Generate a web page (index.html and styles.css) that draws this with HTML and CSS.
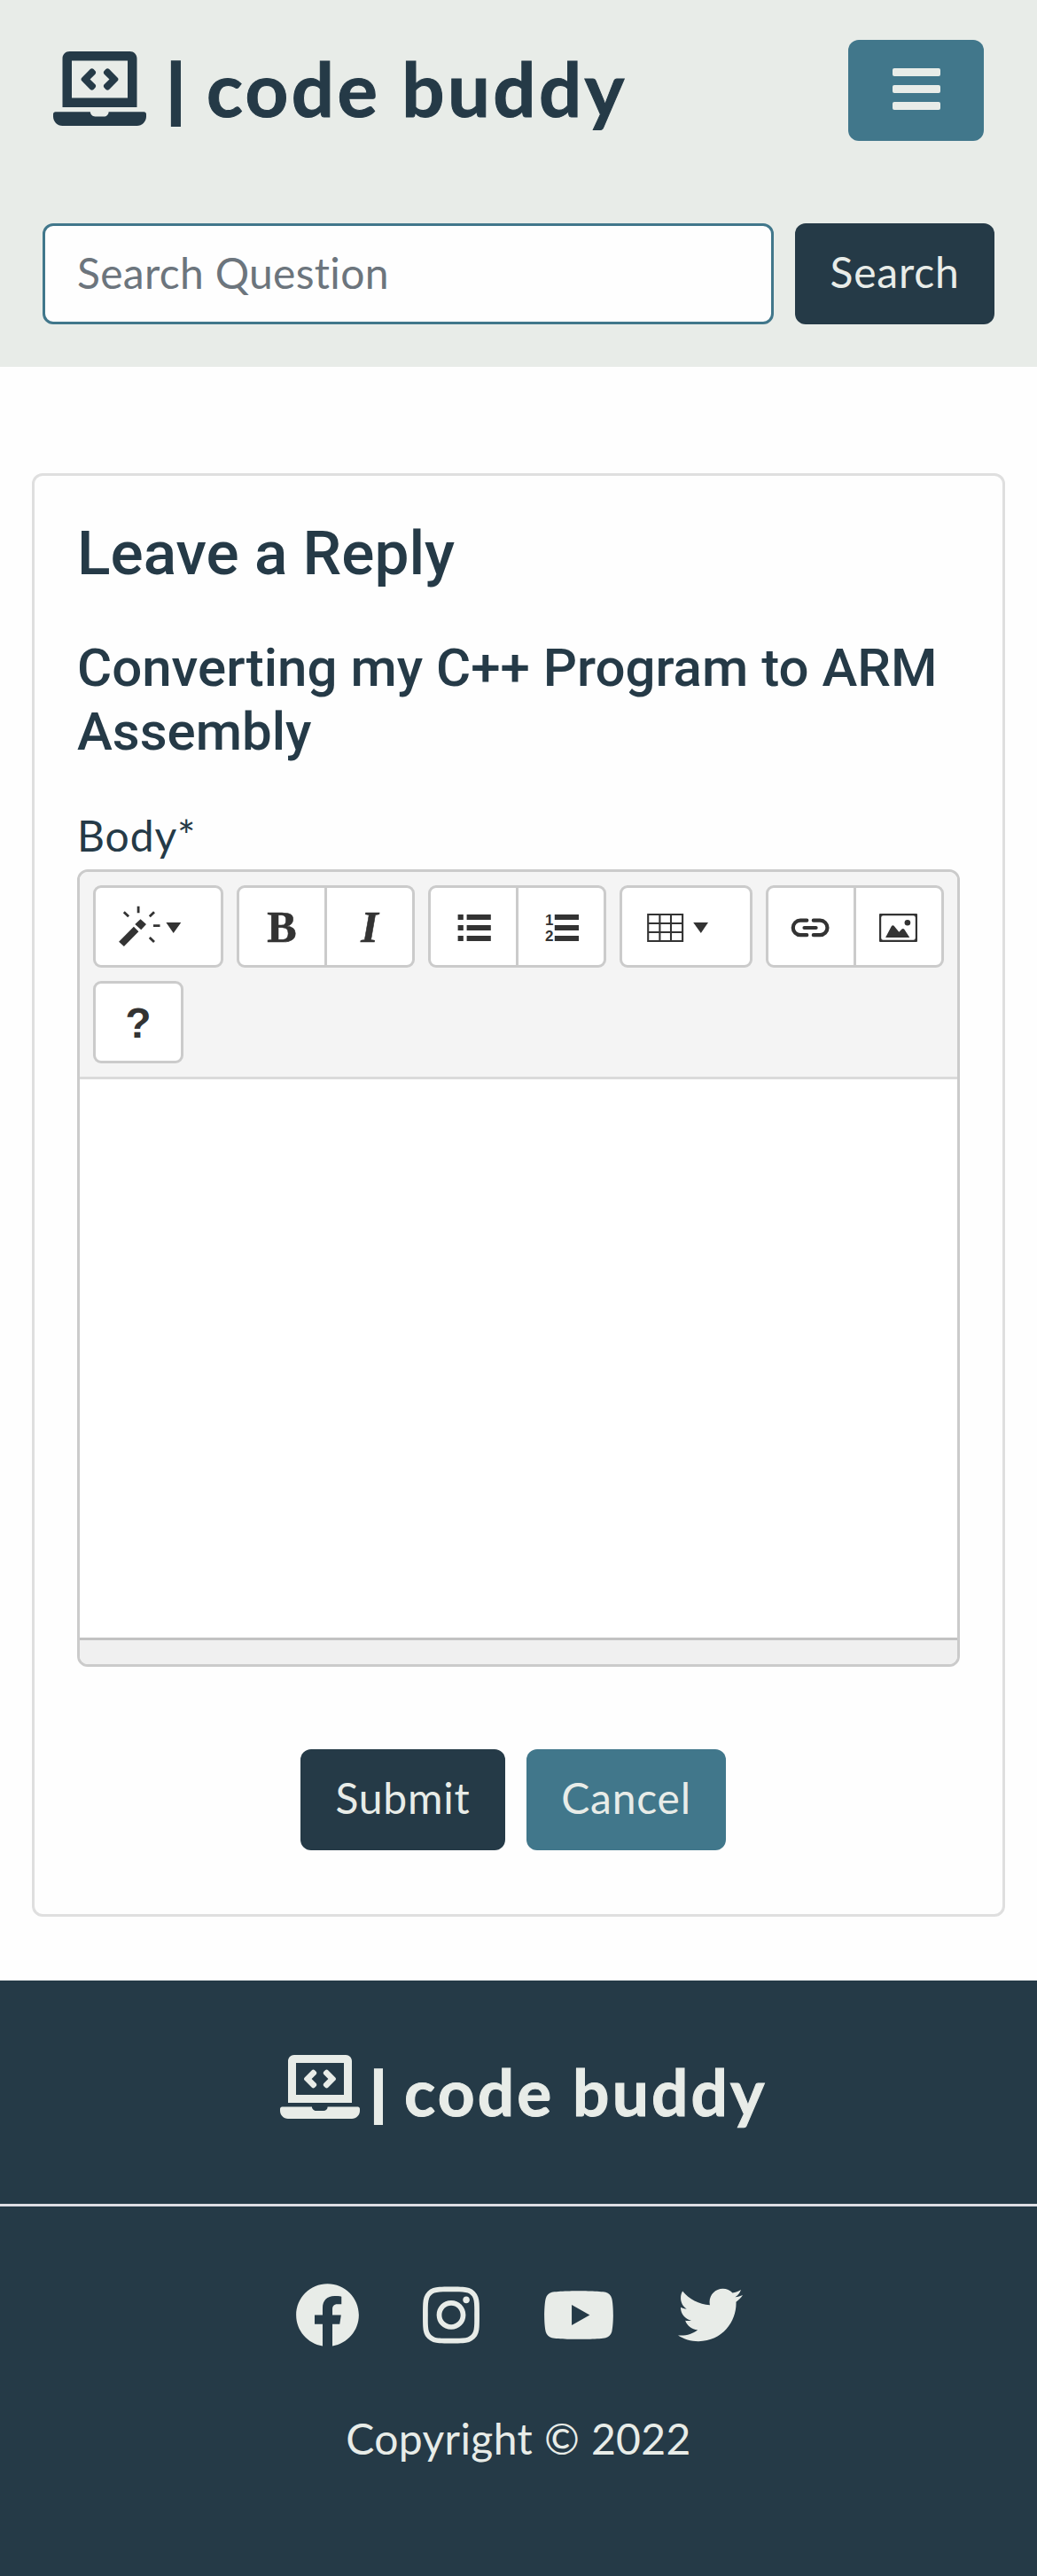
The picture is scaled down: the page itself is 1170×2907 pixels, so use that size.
FILE: index.html
```html
<!DOCTYPE html>
<html lang="en">
<head>
<meta charset="utf-8">
<title>code buddy</title>
<link rel="stylesheet" href="styles.css">
</head>
<body>
<svg class="defs" aria-hidden="true">
  <symbol id="laptop" viewBox="0 0 640 512"><path d="M255.03 261.65c6.25 6.25 16.38 6.25 22.63 0l11.31-11.31c6.25-6.25 6.25-16.38 0-22.63L253.25 192l35.71-35.72c6.25-6.25 6.25-16.38 0-22.63l-11.31-11.31c-6.25-6.25-16.38-6.25-22.63 0l-58.34 58.34c-6.25 6.25-6.25 16.38 0 22.63l58.35 58.34zm96.01-11.3l11.31 11.31c6.25 6.25 16.38 6.25 22.63 0l58.34-58.34c6.25-6.25 6.25-16.38 0-22.63l-58.34-58.34c-6.25-6.25-16.38-6.25-22.63 0l-11.31 11.31c-6.25 6.25-6.25 16.38 0 22.63L386.75 192l-35.71 35.72c-6.25 6.25-6.25 16.38 0 22.63zM624 416H381.54c-.74 19.81-14.71 32-32.74 32H288c-18.69 0-33.02-17.47-32.77-32H16c-8.8 0-16 7.2-16 16v16c0 35.2 28.8 64 64 64h512c35.2 0 64-28.8 64-64v-16c0-8.8-7.2-16-16-16zM576 48c0-26.4-21.6-48-48-48H112C85.6 0 64 21.6 64 48v336h512V48zm-64 272H128V64h384v256z"/></symbol>
</svg>
<header class="header">
  <div class="topbar">
    <a class="brand"><svg class="brand-icon"><use href="#laptop"/></svg><span class="brand-bar">|</span><span class="brand-name">code buddy</span></a>
    <button class="btn toggler" aria-label="Menu"><span class="line"></span><span class="line"></span><span class="line"></span></button>
  </div>
  <form class="search">
    <input class="search-input" type="text" placeholder="Search Question">
    <button class="btn btn-dark search-btn" type="button">Search</button>
  </form>
</header>
<main class="card">
  <h1 class="title">Leave a Reply</h1>
  <h2 class="question">Converting my C++ Program to ARM Assembly</h2>
  <div class="label">Body*</div>
  <div class="editor">
    <div class="toolbar">
      <div class="group"><div class="tool style">
        <svg width="141" height="87" viewBox="0 0 141 87"><path d="M26.1 60.7 42.9 43.7 48.4 49.3 31.9 66ZM50.5 35.3 57 41 51.2 47.3 44.3 41ZM79.4 39H96.3L87.7 51Z"/><path class="thin" d="M48.1 20.7V28.3M31.8 27.3 37.1 32.3M66 27.3 60.8 32.3M65 42.7H72.5M60.8 56 66 61"/></svg>
      </div></div>
      <div class="group"><div class="tool serif">B</div><div class="tool serif italic">I</div></div>
      <div class="group">
        <div class="tool"><svg width="96" height="87" viewBox="0 0 96 87"><path d="M30.6 30h6.2v6h-6.2zM30.6 42h6.2v6h-6.2zM30.6 54h6.2v6h-6.2zM40.6 30h27.2v6H40.6zM40.6 42h27.2v6H40.6zM40.6 54h27.2v6H40.6z"/></svg></div>
        <div class="tool"><svg width="96" height="87" viewBox="0 0 96 87"><path d="M40.8 30H68v6H40.8zM40.8 42H68v6H40.8zM40.8 54H68v6H40.8z"/><text class="digit" x="30" y="42">1</text><text class="digit" x="30" y="60">2</text></svg></div>
      </div>
      <div class="group"><div class="tool table">
        <svg width="144" height="87" viewBox="0 0 144 87"><path class="grid" d="M29.2 30H68.1V60H29.2ZM42.4 30V60M55 30V60M29.2 40H68.1M29.2 50H68.1"/><path d="M80.2 39H97L88.8 51Z"/></svg>
      </div></div>
      <div class="group">
        <div class="tool"><svg width="96" height="87" viewBox="0 0 96 87"><path class="link" d="M43.3 36.7H36A8.2 8.2 0 0 0 36 53.2H43.3M50.8 36.7H58.2A8.2 8.2 0 0 1 58.2 53.2H50.8M40.5 45H53.6"/></svg></div>
        <div class="tool"><svg width="96" height="87" viewBox="0 0 96 87"><path fill-rule="evenodd" d="M27 29H68a1 1 0 0 1 1 1V60a1 1 0 0 1-1 1H27a1 1 0 0 1-1-1V30a1 1 0 0 1 1-1ZM30.500 31.200a2.300 2.300 0 0 0-2.300 2.300V56.500a2.300 2.300 0 0 0 2.300 2.300H64.500a2.300 2.300 0 0 0 2.300-2.300V33.500a2.300 2.300 0 0 0-2.300-2.300Z"/><circle cx="57.9" cy="39.2" r="3.3"/><path d="M33.1 56 39.8 43.2Q41.4 41.2 43 43.2L48.3 49.7 51.5 46.6Q53 45.3 54.3 46.8L60.3 56Z"/></svg></div>
      </div>
      <div class="group"><div class="tool help">?</div></div>
    </div>
    <div class="editable"></div>
    <div class="statusbar"></div>
  </div>
  <div class="actions">
    <button class="btn btn-dark submit">Submit</button>
    <button class="btn btn-teal cancel">Cancel</button>
  </div>
</main>
<footer class="footer">
  <div class="footer-brand"><svg class="brand-icon"><use href="#laptop"/></svg><span class="brand-bar">|</span><span class="brand-name">code buddy</span></div>
  <div class="social">
    <svg width="73" height="73" viewBox="0 0 512 512"><path d="M504 256C504 119 393 8 256 8S8 119 8 256c0 123.78 90.69 226.38 209.25 245V327.69h-63V256h63v-54.64c0-62.15 37-96.48 93.67-96.48 27.14 0 55.52 4.84 55.52 4.84v61h-31.28c-30.8 0-40.41 19.12-40.41 38.73V256h68.78l-11 71.69h-57.78V501C413.31 482.38 504 379.78 504 256z"/></svg>
    <svg width="64" height="73" viewBox="0 0 448 512"><path d="M224.1 141c-63.6 0-114.9 51.3-114.9 114.9s51.3 114.9 114.9 114.9S339 319.5 339 255.9 287.7 141 224.1 141zm0 189.600c-41.1 0-74.7-33.500-74.7-74.700s33.500-74.700 74.700-74.700 74.700 33.500 74.700 74.700-33.600 74.700-74.700 74.700zm146.400-194.300c0 14.900-12 26.800-26.800 26.800-14.900 0-26.800-12-26.800-26.800s12-26.800 26.800-26.800 26.800 12 26.800 26.800zm76.100 27.200c-1.700-35.900-9.900-67.700-36.200-93.900-26.200-26.200-58-34.400-93.900-36.200-37-2.100-147.900-2.100-184.900 0-35.800 1.700-67.600 9.900-93.900 36.100s-34.400 58-36.200 93.900c-2.100 37-2.100 147.900 0 184.900 1.700 35.900 9.900 67.700 36.200 93.900s58 34.400 93.900 36.200c37 2.100 147.900 2.100 184.900 0 35.900-1.700 67.700-9.900 93.900-36.200 26.200-26.200 34.400-58 36.200-93.900 2.100-37 2.100-147.800 0-184.800zM398.800 388c-7.800 19.600-22.900 34.700-42.600 42.600-29.500 11.700-99.500 9-132.100 9s-102.700 2.600-132.100-9c-19.600-7.800-34.700-22.900-42.600-42.600-11.700-29.500-9-99.500-9-132.100s-2.600-102.700 9-132.100c7.800-19.600 22.900-34.700 42.600-42.600 29.500-11.700 99.500-9 132.100-9s102.700-2.600 132.100 9c19.600 7.800 34.700 22.900 42.600 42.600 11.700 29.500 9 99.500 9 132.100s2.700 102.700-9 132.100z"/></svg>
    <svg width="82" height="73" viewBox="0 0 576 512"><path d="M549.655 124.083c-6.281-23.650-24.787-42.276-48.284-48.597C458.781 64 288 64 288 64S117.220 64 74.629 75.486c-23.497 6.322-42.003 24.947-48.284 48.597-11.412 42.867-11.412 132.305-11.412 132.305s0 89.438 11.412 132.305c6.281 23.650 24.787 41.500 48.284 47.821C117.220 448 288 448 288 448s170.780 0 213.371-11.486c23.497-6.321 42.003-24.171 48.284-47.821 11.412-42.867 11.412-132.305 11.412-132.305s0-89.438-11.412-132.305zm-317.510 213.508V175.185l142.739 81.205-142.739 81.201z"/></svg>
    <svg width="73" height="73" viewBox="0 0 512 512"><path d="M459.37 151.716c.325 4.548.325 9.097.325 13.645 0 138.720-105.583 298.558-298.558 298.558-59.452 0-114.680-17.219-161.137-47.106 8.447.974 16.568 1.299 25.340 1.299 49.055 0 94.213-16.568 130.274-44.832-46.132-.975-84.792-31.188-98.112-72.772 6.498.974 12.995 1.624 19.818 1.624 9.421 0 18.843-1.300 27.614-3.573-48.081-9.747-84.143-51.980-84.143-102.985v-1.299c13.969 7.797 30.214 12.670 47.431 13.319-28.264-18.843-46.781-51.005-46.781-87.391 0-19.492 5.197-37.360 14.294-52.954 51.655 63.675 129.300 105.258 216.365 109.807-1.624-7.797-2.599-15.918-2.599-24.040 0-57.828 46.782-104.934 104.934-104.934 30.213 0 57.502 12.670 76.670 33.137 23.715-4.548 46.456-13.320 66.599-25.340-7.798 24.366-24.366 44.833-46.132 57.827 21.117-2.273 41.584-8.122 60.426-16.243-14.292 20.791-32.161 39.308-52.628 54.253z"/></svg>
  </div>
  <div class="copyright">Copyright © 2022</div>
</footer>
</body>
</html>
```

FILE: styles.css
```css
* { box-sizing: border-box; }
body {
  margin: 0;
  background: #fefefe;
  color: #253a47;
  font-family: Lato, "Open Sans", sans-serif;
  font-size: 48px;
  line-height: 72px;
  font-variant-ligatures: none;
}
.defs { display: none; }
svg { display: block; fill: currentColor; flex: none; }

.header { height: 414px; background: #e8ece8; }
.topbar {
  display: flex;
  justify-content: space-between;
  padding: 45px 60px 0;
  height: 252px;
}
.brand, .footer-brand { display: flex; font-weight: 700; white-space: nowrap; }
.brand { height: 114px; color: #253a47; }
.brand .brand-icon { width: 105px; height: 84px; margin-top: 13px; }
.brand-bar { -webkit-text-stroke: 4px currentColor; text-align: center; }
.brand .brand-bar { width: 67px; font-size: 74px; line-height: 110px; }
.brand .brand-name { font-size: 85px; line-height: 108px; letter-spacing: 3.4px; margin-left: 1px; -webkit-text-stroke: 1px currentColor; }

.btn {
  height: 114px;
  border: 0;
  border-radius: 12px;
  padding: 0 0 4px;
  color: #e8ece8;
  font: inherit;
  letter-spacing: 0.8px;
  text-align: center;
}
.btn-dark { background: #253a47; }
.btn-teal, .toggler { background: #41778b; }
.toggler {
  width: 153px;
  display: flex;
  flex-direction: column;
  align-items: center;
  justify-content: center;
  gap: 10px;
  padding-bottom: 3px;
}
.line { width: 54px; height: 9px; border-radius: 2px; background: #e8ece8; }

.search { display: flex; gap: 24px; padding: 0 48px; }
.search-input {
  flex: 1;
  min-width: 0;
  height: 114px;
  border: 3px solid #41778b;
  border-radius: 12px;
  background: #fefefe;
  padding: 0 36px 4px;
  font: inherit;
  letter-spacing: 0.3px;
}
.search-input::placeholder { color: #6c757d; opacity: 1; }
.search-btn { width: 225px; }

.card {
  margin: 120px 36px 72px;
  height: 1629px;
  border: 3px solid #dfdfdf;
  border-radius: 12px;
  padding: 46px 48px 0;
}
.title, .question { margin: 0; font-family: Roboto, sans-serif; font-weight: 500; line-height: 1.2; }
.title { font-size: 69.4px; height: 84px; }
.question { font-size: 60px; margin-top: 51px; }
.label { height: 72px; margin-top: 45px; letter-spacing: 0.9px; }

.editor {
  height: 900px;
  margin-top: 2px;
  border: 3px solid #cbcbcb;
  border-radius: 12px;
  background: #fff;
  overflow: hidden;
  display: flex;
  flex-direction: column;
}
.toolbar {
  display: flex;
  flex-wrap: wrap;
  align-content: flex-start;
  gap: 15px;
  height: 234px;
  padding: 15px;
  background: #f4f4f4;
  border-bottom: 3px solid #dadada;
}
.group {
  display: flex;
  height: 93px;
  border: 3px solid #cbcbcb;
  border-radius: 9px;
  background: #fff;
  color: #333;
}
.tool { width: 96px; height: 87px; text-align: center; }
.tool + .tool { width: 99px; border-left: 3px solid #cbcbcb; }
.tool.style { width: 141px; }
.tool.table { width: 144px; }
.serif { font: 700 50px/88px "Liberation Serif", serif; -webkit-text-stroke: 0.6px currentColor; }
.italic { font-style: italic; }
.help { font: 700 48px/90px "Liberation Sans", sans-serif; }
.thin { stroke: currentColor; stroke-width: 2.8; }
.grid { fill: none; stroke: currentColor; stroke-width: 2.1; }
.link { fill: none; stroke: currentColor; stroke-width: 4.2; stroke-linecap: round; }
.digit { font: 700 17px "Liberation Sans", sans-serif; }
.editable { flex: 1; }
.statusbar { height: 30px; background: #f0f0f0; border-top: 3px solid #c2c2c2; }

.actions { display: flex; gap: 24px; padding: 93px 0 0 252px; }
.submit { width: 231px; }
.cancel { width: 225px; }

.footer { height: 672px; background: #253a47; color: #e8ece8; }
.footer-brand { height: 255px; padding-left: 316px; border-bottom: 3px solid #dedee4; }
.footer-brand .brand-icon { width: 90px; height: 72px; margin-top: 84px; }
.footer-brand .brand-bar { width: 42px; font-size: 63px; line-height: 96px; margin-top: 78px; }
.footer-brand .brand-name { margin: 77px 0 0 8px; font-size: 73px; line-height: 96px; letter-spacing: 3.1px; -webkit-text-stroke: 1px currentColor; }
.social { display: flex; justify-content: center; gap: 71px; padding-top: 86px; }
.copyright { text-align: center; margin-top: 67px; letter-spacing: 0.4px; }
```
